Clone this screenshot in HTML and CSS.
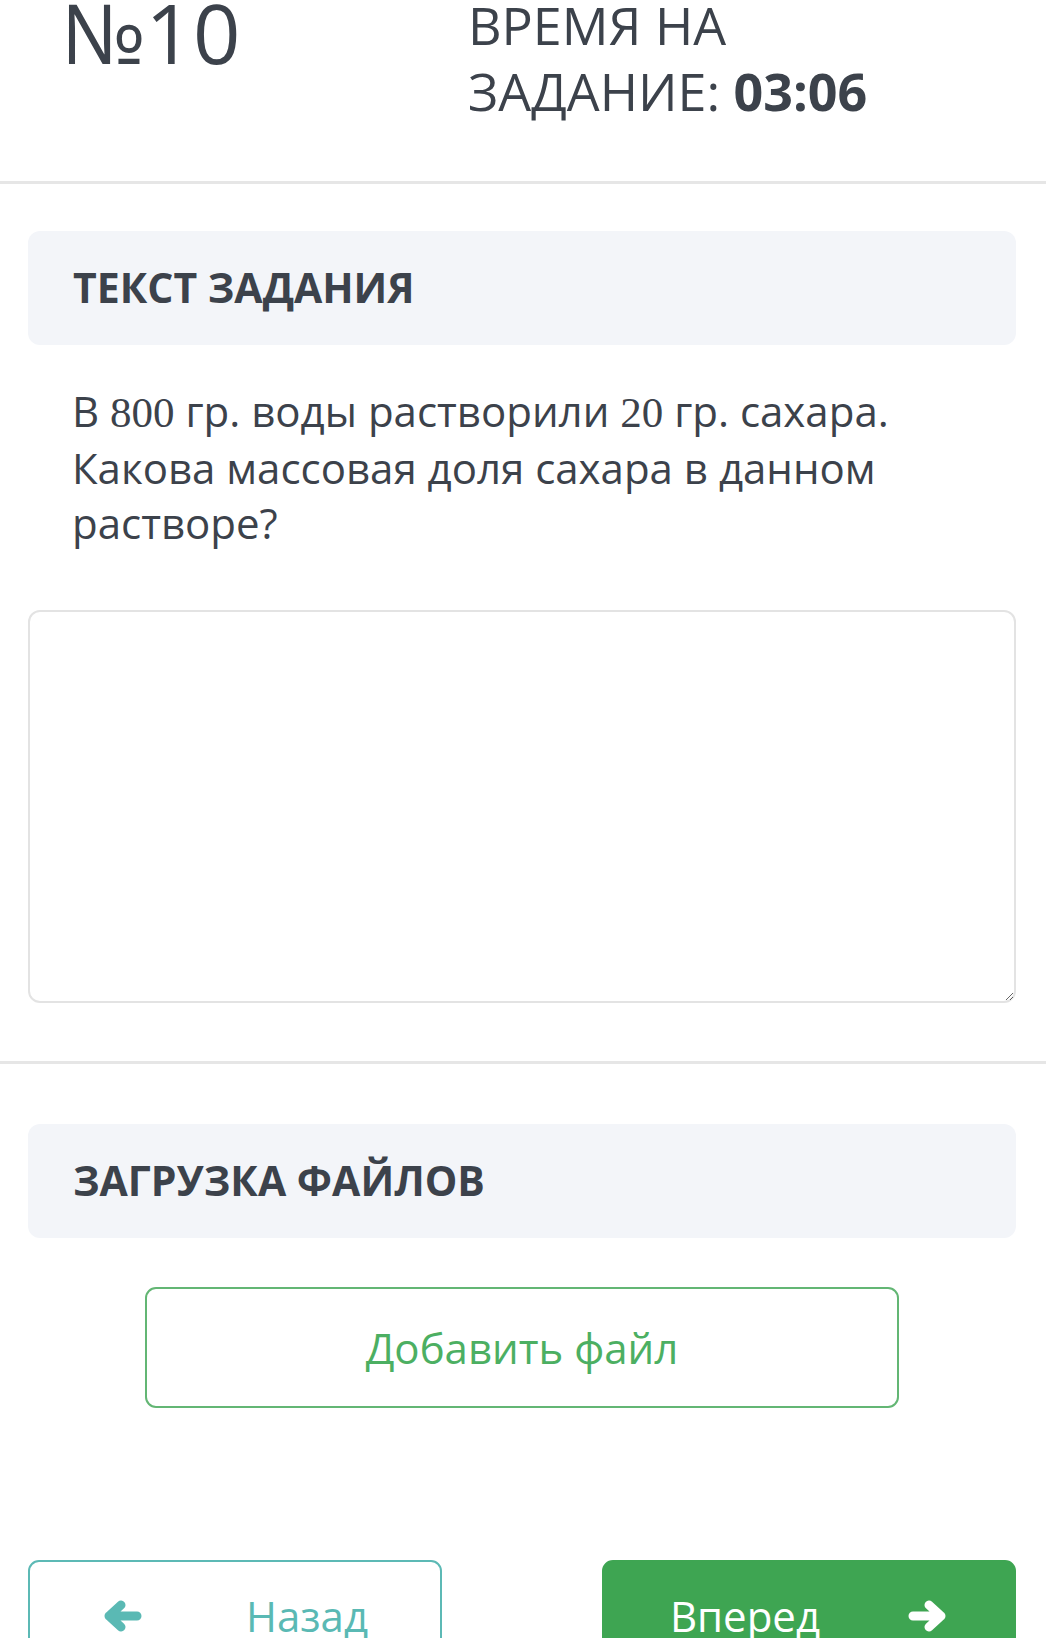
FILE: index.html
```html
<!DOCTYPE html>
<html lang="ru">
<head>
  <meta charset="UTF-8">
  <meta name="viewport" content="width=device-width, initial-scale=1.0">
  <title>Задание №10</title>
  <link rel="stylesheet" href="styles.css">
</head>
<body>
  <header class="task-head">
    <div class="task-num">№10</div>
    <div class="task-timer">ВРЕМЯ НА<br>ЗАДАНИЕ: <b>03:06</b></div>
  </header>

  <section class="block block-answer">
    <div class="block-title">ТЕКСТ ЗАДАНИЯ</div>
    <p class="task-text">В <span class="num">800</span> гр. воды растворили <span class="num">20</span> гр. сахара. Какова массовая доля сахара в данном растворе?</p>
    <textarea class="answer" name="answer"></textarea>
  </section>

  <section class="block block-files">
    <div class="block-title">ЗАГРУЗКА ФАЙЛОВ</div>
    <button class="btn-file" type="button">Добавить файл</button>

    <div class="nav">
      <button class="btn-nav btn-back" type="button">
        <svg width="40" height="32" viewBox="0 0 40 32"><path d="M35 16H7M19 5L7 16L19 27" fill="none" stroke="currentColor" stroke-width="9" stroke-linecap="round" stroke-linejoin="round"/></svg>
        <span>Назад</span>
      </button>
      <button class="btn-nav btn-next" type="button">
        <span>Вперед</span>
        <svg width="40" height="32" viewBox="0 0 40 32"><path d="M5 16H33M21 5L33 16L21 27" fill="none" stroke="currentColor" stroke-width="9" stroke-linecap="round" stroke-linejoin="round"/></svg>
      </button>
    </div>
  </section>
</body>
</html>
```

FILE: styles.css
```css
body {
  margin: 0;
  font-family: "Open Sans", "Noto Sans", sans-serif;
  color: #3c424b;
  background: #fff;
}
.task-head {
  display: flex;
  align-items: flex-start;
  margin-top: -8px;
  padding: 0 0 57px 61px;
  border-bottom: 3px solid #e6e6e6;
}
.task-num {
  width: 407px;
  font-size: 83px;
  line-height: 80px;
}
.task-timer {
  font-size: 52px;
  line-height: 66px;
}
.task-timer b {
  font-weight: 700;
}
.block {
  padding: 47px 30px 0 28px;
}
.block-answer {
  padding-bottom: 58px;
  border-bottom: 3px solid #e6e6e6;
}
.block-files {
  padding-top: 60px;
}
.block-title {
  background: #f3f5f9;
  border-radius: 12px;
  padding: 31px 45px 33px;
  font-size: 41px;
  line-height: 50px;
  font-weight: 700;
}
.task-text {
  margin: 38px 0 0;
  padding: 0 44px;
  font-size: 42px;
  line-height: 55px;
}
.task-text .num {
  font-family: "Liberation Serif", serif;
  font-size: 43px;
}
.answer {
  display: block;
  box-sizing: border-box;
  width: 100%;
  height: 393px;
  margin-top: 60px;
  border: 2px solid #e3e3e3;
  border-radius: 12px;
  font-family: inherit;
  font-size: 30px;
}
.btn-file {
  display: block;
  box-sizing: border-box;
  width: 754px;
  height: 121px;
  margin: 49px auto 0;
  background: #fff;
  border: 2px solid #63b674;
  border-radius: 11px;
  color: #4caf62;
  font-family: inherit;
  font-size: 42px;
}
.nav {
  display: flex;
  justify-content: space-between;
  margin-top: 152px;
}
.btn-nav {
  display: flex;
  align-items: center;
  justify-content: center;
  gap: 104px;
  box-sizing: border-box;
  width: 414px;
  height: 121px;
  padding: 0 0 10px;
  border-radius: 11px;
  font-family: inherit;
  font-size: 42px;
}
.btn-back {
  background: #fff;
  border: 2px solid #5cb9b5;
  color: #5ab9b4;
}
.btn-next {
  background: #3ea552;
  border: 2px solid #3ea552;
  color: #fff;
  gap: 88px;
}
```
